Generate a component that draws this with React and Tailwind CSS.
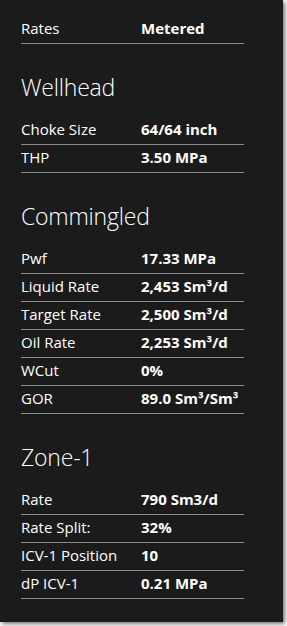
import React from "react";

const font = { fontFamily: '"Open Sans", "Noto Sans", sans-serif' };

function Row({ label, value, last }) {
  return (
    <div
      className={`flex pt-[2px] pb-[5px] text-[15px] leading-[20px] text-white border-b ${
        last ? "border-[#6a6a6a]" : "border-[#8a8a8a]"
      }`}
    >
      <div className="w-[120px] shrink-0">{label}</div>
      <div className="font-bold">{value}</div>
    </div>
  );
}

function Heading({ children }) {
  return (
    <div className="mt-[27px] mb-[14px] text-[23px] leading-[32px] font-light tracking-[-0.2px] text-white">
      {children}
    </div>
  );
}

export default function App() {
  return (
    <div className="w-[287px] h-[626px] bg-white" style={font}>
      <div className="w-[283px] h-[622px] bg-[#1b1b1b] shadow-[2px_2px_4px_rgba(0,0,0,0.55)] pt-[16px] pl-[21px]">
        <div className="w-[223px]">
          <Row label="Rates" value="Metered" />
          <Heading>Wellhead</Heading>
          <Row label="Choke Size" value="64/64 inch" />
          <Row label="THP" value="3.50 MPa" />
          <Heading>Commingled</Heading>
          <Row label="Pwf" value="17.33 MPa" />
          <Row label="Liquid Rate" value="2,453 Sm³/d" />
          <Row label="Target Rate" value="2,500 Sm³/d" />
          <Row label="Oil Rate" value="2,253 Sm³/d" />
          <Row label="WCut" value="0%" />
          <Row label="GOR" value="89.0 Sm³/Sm³" />
          <Heading>Zone-1</Heading>
          <Row label="Rate" value="790 Sm3/d" />
          <Row label="Rate Split:" value="32%" />
          <Row label="ICV-1 Position" value="10" />
          <Row label="dP ICV-1" value="0.21 MPa" />
        </div>
      </div>
    </div>
  );
}
